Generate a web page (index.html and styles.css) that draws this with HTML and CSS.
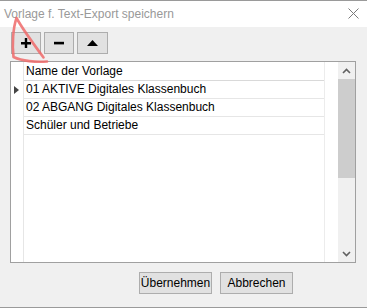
FILE: index.html
```html
<!DOCTYPE html>
<html lang="de">
<head>
<meta charset="utf-8">
<title>Vorlage f. Text-Export speichern</title>
<link rel="stylesheet" href="styles.css">
</head>
<body>
<div class="window">
  <div class="titlebar">
    <span class="title">Vorlage f. Text-Export speichern</span>
    <svg class="close" width="11" height="11" viewBox="0 0 11 11"><path d="M0.5 0.5 L10.5 10.5 M10.5 0.5 L0.5 10.5" stroke="#7a7a7a" stroke-width="1" fill="none"/></svg>
  </div>
  <div class="body">
    <div class="toolbar">
      <button class="tbtn"><svg width="10" height="10" viewBox="0 0 10 10"><path d="M0 4h10v2.4H0zM3.8 0h2.4v10H3.8z" fill="#000"/></svg></button>
      <button class="tbtn"><svg width="10" height="10" viewBox="0 0 10 10"><path d="M0 3.8h10v2.6H0z" fill="#000"/></svg></button>
      <button class="tbtn"><svg width="11" height="6" viewBox="0 0 11 6"><path d="M0 6 L5.5 0 L11 6 Z" fill="#000"/></svg></button>
    </div>
    <div class="grid">
      <div class="gridmain">
        <div class="col-ind">
          <div class="hcell"></div>
          <div class="cell cur"><svg width="5" height="8" viewBox="0 0 5 8"><path d="M0 0 L5 4 L0 8 Z" fill="#444"/></svg></div>
          <div class="cell"></div>
          <div class="cell"></div>
        </div>
        <div class="col-name">
          <div class="hcell">Name der Vorlage</div>
          <div class="cell">01 AKTIVE Digitales Klassenbuch</div>
          <div class="cell">02 ABGANG Digitales Klassenbuch</div>
          <div class="cell">Schüler und Betriebe</div>
        </div>
      </div>
      <div class="scrollbar">
        <div class="sarrow"><svg width="9" height="6" viewBox="0 0 9 6"><path d="M1 5 L4.5 1.5 L8 5" stroke="#606060" stroke-width="1.6" fill="none"/></svg></div>
        <div class="thumb"></div>
        <div class="track"></div>
        <div class="sarrow"><svg width="9" height="6" viewBox="0 0 9 6"><path d="M1 1 L4.5 4.5 L8 1" stroke="#606060" stroke-width="1.6" fill="none"/></svg></div>
      </div>
    </div>
    <div class="footer">
      <button class="btn">Übernehmen</button>
      <button class="btn">Abbrechen</button>
    </div>
  </div>
  <svg class="annot" width="60" height="70" viewBox="0 0 60 70"><path d="M47 60.5 C36 61.5 22 60 13.5 56 C12 44 13 27 16.5 17 C22 27 35 45 43.5 56.5" stroke="#ee6a6a" stroke-width="2.6" fill="none" stroke-linecap="round" stroke-linejoin="round" opacity="0.85"/></svg>
</div>
</body>
</html>
```
FILE: styles.css
```css
html, body {
  margin: 0;
  padding: 0;
  background: #f0f0f0;
}
.window {
  position: relative;
  width: 367px;
  height: 308px;
  box-sizing: border-box;
  border-top: 1px solid #9a9a9a;
  border-bottom: 1px solid #9a9a9a;
  display: flex;
  flex-direction: column;
  font-family: "Liberation Sans", Arial, sans-serif;
  font-size: 12px;
  color: #000;
  background: #f0f0f0;
}
.titlebar {
  height: 26px;
  background: #fff;
  display: flex;
  align-items: center;
  justify-content: space-between;
  padding: 0 8px 0 4px;
}
.title {
  color: #999;
  font-size: 12px;
  margin-top: -1px;
}
.close {
  margin-top: -1px;
}
.body {
  flex: 1;
  display: flex;
  flex-direction: column;
  padding: 5px 11px 0 10px;
}
.toolbar {
  display: flex;
  gap: 3px;
  padding-left: 1px;
}
.tbtn {
  width: 30px;
  height: 22px;
  margin: 0;
  padding: 0;
  background: #e1e1e1;
  border: 1px solid #adadad;
  display: flex;
  align-items: center;
  justify-content: center;
}
.tbtn:last-child {
  width: 31px;
}
.grid {
  margin-top: 7px;
  height: 202px;
  box-sizing: border-box;
  border: 1px solid #a0a0a0;
  background: #fff;
  display: flex;
}
.gridmain {
  flex: 1;
  display: flex;
}
.col-ind {
  width: 12px;
  border-right: 1px solid #e6e6e6;
}
.col-name {
  width: 300px;
  border-right: 1px solid #ececec;
}
.hcell {
  height: 18px;
  border-bottom: 1px solid #d9d9d9;
  line-height: 18px;
  padding-left: 2px;
}
.cell {
  height: 17px;
  border-bottom: 1px solid #e6e6e6;
  line-height: 17px;
  padding-left: 2px;
  white-space: nowrap;
}
.col-ind .hcell, .col-ind .cell {
  padding-left: 0;
  border-bottom-color: transparent;
}
.cur {
  display: flex;
  align-items: center;
  padding-left: 3px !important;
}
.scrollbar {
  width: 17px;
  background: #f0f0f0;
  display: flex;
  flex-direction: column;
}
.sarrow {
  height: 17px;
  display: flex;
  align-items: center;
  justify-content: center;
}
.thumb {
  height: 99px;
  background: #cdcdcd;
}
.track {
  flex: 1;
}
.footer {
  margin-top: 9px;
  display: flex;
  justify-content: flex-end;
  gap: 8px;
  padding-right: 63px;
}
.btn {
  width: 73px;
  height: 22px;
  margin: 0;
  padding: 0;
  background: #e1e1e1;
  border: 1px solid #adadad;
  font-family: "Liberation Sans", Arial, sans-serif;
  font-size: 12px;
  color: #000;
}
.annot {
  position: absolute;
  left: 0;
  top: 0;
  pointer-events: none;
}
```
